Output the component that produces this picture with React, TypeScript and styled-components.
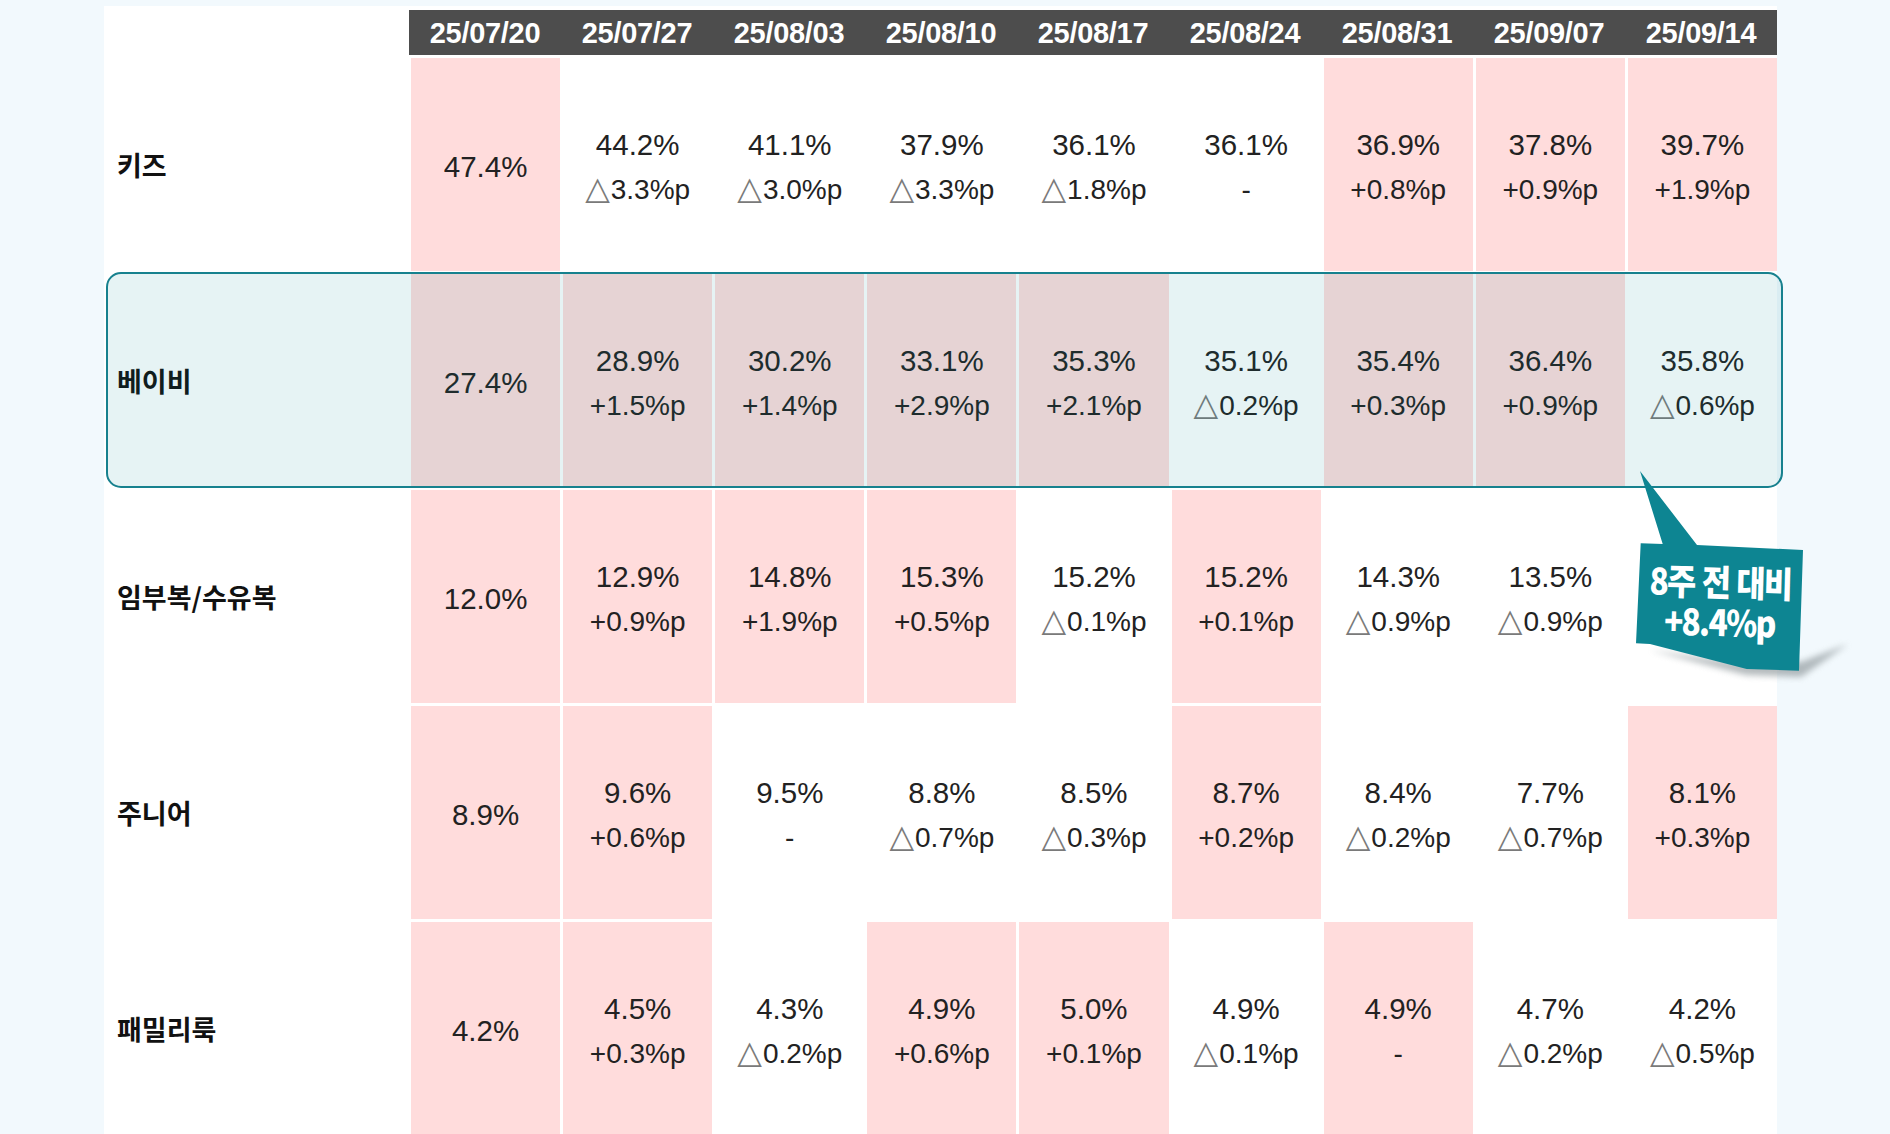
import * as React from "react";
import styled, { createGlobalStyle } from "styled-components";

const GlobalStyle = createGlobalStyle`
	html, body {
		margin: 0;
		padding: 0;
		background: #f2f9fd;
		overflow: hidden;
	}
	body {
		font-family: "Liberation Sans", "DejaVu Sans", sans-serif;
	}
`;

const DATES = [
	"25/07/20",
	"25/07/27",
	"25/08/03",
	"25/08/10",
	"25/08/17",
	"25/08/24",
	"25/08/31",
	"25/09/07",
	"25/09/14",
];

type CellData = { v: string; d?: string; hot?: boolean };
type RowData = { label: string; highlight?: boolean; cells: CellData[] };

const ROWS: RowData[] = [
	{
		label: "키즈",
		cells: [
			{ v: "47.4%", hot: true },
			{ v: "44.2%", d: "△3.3%p" },
			{ v: "41.1%", d: "△3.0%p" },
			{ v: "37.9%", d: "△3.3%p" },
			{ v: "36.1%", d: "△1.8%p" },
			{ v: "36.1%", d: "-" },
			{ v: "36.9%", d: "+0.8%p", hot: true },
			{ v: "37.8%", d: "+0.9%p", hot: true },
			{ v: "39.7%", d: "+1.9%p", hot: true },
		],
	},
	{
		label: "베이비",
		highlight: true,
		cells: [
			{ v: "27.4%", hot: true },
			{ v: "28.9%", d: "+1.5%p", hot: true },
			{ v: "30.2%", d: "+1.4%p", hot: true },
			{ v: "33.1%", d: "+2.9%p", hot: true },
			{ v: "35.3%", d: "+2.1%p", hot: true },
			{ v: "35.1%", d: "△0.2%p" },
			{ v: "35.4%", d: "+0.3%p", hot: true },
			{ v: "36.4%", d: "+0.9%p", hot: true },
			{ v: "35.8%", d: "△0.6%p" },
		],
	},
	{
		label: "임부복/수유복",
		cells: [
			{ v: "12.0%", hot: true },
			{ v: "12.9%", d: "+0.9%p", hot: true },
			{ v: "14.8%", d: "+1.9%p", hot: true },
			{ v: "15.3%", d: "+0.5%p", hot: true },
			{ v: "15.2%", d: "△0.1%p" },
			{ v: "15.2%", d: "+0.1%p", hot: true },
			{ v: "14.3%", d: "△0.9%p" },
			{ v: "13.5%", d: "△0.9%p" },
			{ v: "" },
		],
	},
	{
		label: "주니어",
		cells: [
			{ v: "8.9%", hot: true },
			{ v: "9.6%", d: "+0.6%p", hot: true },
			{ v: "9.5%", d: "-" },
			{ v: "8.8%", d: "△0.7%p" },
			{ v: "8.5%", d: "△0.3%p" },
			{ v: "8.7%", d: "+0.2%p", hot: true },
			{ v: "8.4%", d: "△0.2%p" },
			{ v: "7.7%", d: "△0.7%p" },
			{ v: "8.1%", d: "+0.3%p", hot: true },
		],
	},
	{
		label: "패밀리룩",
		cells: [
			{ v: "4.2%", hot: true },
			{ v: "4.5%", d: "+0.3%p", hot: true },
			{ v: "4.3%", d: "△0.2%p" },
			{ v: "4.9%", d: "+0.6%p", hot: true },
			{ v: "5.0%", d: "+0.1%p", hot: true },
			{ v: "4.9%", d: "△0.1%p" },
			{ v: "4.9%", d: "-", hot: true },
			{ v: "4.7%", d: "△0.2%p" },
			{ v: "4.2%", d: "△0.5%p" },
		],
	},
];

const Panel = styled.div`
	position: relative;
	margin: 6px 0 0 104px;
	width: 1673px;
	padding-top: 4px;
	background: #ffffff;
	display: flex;
	flex-direction: column;
	gap: 3px;
`;

const Row = styled.div<{ $highlight?: boolean }>`
	position: relative;
	display: grid;
	grid-template-columns: 304px repeat(9, 1fr);
	column-gap: 3px;
	height: 213px;
	&::after {
		content: "";
		display: ${({ $highlight }) => ($highlight ? "block" : "none")};
		position: absolute;
		left: 2px;
		right: -6px;
		top: -2px;
		bottom: -1px;
		border: 2px solid #17818e;
		border-radius: 15px;
		background: rgba(14, 134, 148, 0.1);
		pointer-events: none;
	}
`;

const HeaderRow = styled.div`
	display: grid;
	grid-template-columns: 305px 1fr;
	height: 45px;
`;

const HeaderBar = styled.div`
	grid-column: 2;
	display: grid;
	grid-template-columns: repeat(9, 1fr);
	align-items: center;
	background: #4d4d4d;
`;

const DateCell = styled.div`
	text-align: center;
	color: #ffffff;
	font-family: "Liberation Sans", sans-serif;
	font-weight: 700;
	font-size: 29px;
	letter-spacing: -0.3px;
	padding-top: 2px;
`;

const Label = styled.div`
	display: flex;
	align-items: center;
	padding-left: 13px;
	font-family: "Noto Sans CJK KR", "Noto Sans", sans-serif;
	font-weight: 700;
	font-size: 27px;
	color: #111111;
`;

const Cell = styled.div<{ $hot?: boolean }>`
	display: flex;
	flex-direction: column;
	align-items: center;
	justify-content: center;
	padding-top: 4px;
	background: ${({ $hot }) => ($hot ? "#ffdcdc" : "transparent")};
	color: #222222;
	font-family: "Liberation Sans", "DejaVu Sans", sans-serif;
	line-height: 45px;
`;

const Value = styled.div`
	font-size: 29.5px;
`;

const Delta = styled.div`
	font-size: 28px;
`;

const Tri = styled.span`
	font-family: "DejaVu Sans", sans-serif;
	color: #7a7a7a;
	font-size: 32px;
	line-height: 0;
	margin-right: 1px;
`;

const Callout = styled.div`
	position: absolute;
	left: 1532px;
	top: 462px;
	width: 320px;
	height: 220px;
	z-index: 2;
	svg {
		position: absolute;
		left: 0;
		top: 0;
		overflow: visible;
	}
`;

const CalloutText = styled.div`
	position: absolute;
	left: 0;
	top: 92px;
	width: 168px;
	text-align: center;
	color: #ffffff;
	font-family: "Noto Sans CJK KR", "Noto Sans", sans-serif;
	font-weight: 900;
	font-size: 36px;
	line-height: 40px;
	letter-spacing: -2px;
	word-spacing: 2px;
	white-space: nowrap;
	transform: rotate(1.5deg) scaleX(0.88);
`;

const CalloutShape = () => (
	<svg width="220" height="215" viewBox="0 0 220 215">
		<defs>
			<filter id="callout-blur" x="-20%" y="-50%" width="140%" height="200%">
				<feGaussianBlur stdDeviation="3" />
			</filter>
		</defs>
		<path
			d="M14 182 L110 207 L165 209 L212 176 L165 194 L110 196 Z"
			fill="#8c9599"
			opacity="0.65"
			filter="url(#callout-blur)"
		/>
		<path
			d="M4.7 75.3 L26.7 76 L4 3 L61 77 L167 82 L163 202.7 L110.7 201 L14 176 L0 175.3 Z"
			fill="#0d8592"
		/>
	</svg>
);

const DeltaText = ({ text }: { text: string }) => {
	if (text.startsWith("△")) {
		return (
			<Delta>
				<Tri>△</Tri>
				{text.slice(1)}
			</Delta>
		);
	}
	return <Delta>{text}</Delta>;
};

const App = () => {
	return (
		<>
			<GlobalStyle />
			<Panel>
				<HeaderRow>
					<HeaderBar>
						{DATES.map((d) => (
							<DateCell key={d}>{d}</DateCell>
						))}
					</HeaderBar>
				</HeaderRow>
				{ROWS.map((row) => (
					<Row key={row.label} $highlight={row.highlight}>
						<Label>{row.label}</Label>
						{row.cells.map((c, i) => (
							<Cell key={i} $hot={c.hot}>
								{c.v && <Value>{c.v}</Value>}
								{c.d && <DeltaText text={c.d} />}
							</Cell>
						))}
					</Row>
				))}
				<Callout>
					<CalloutShape />
					<CalloutText>
						8주 전 대비
						<br />
						+8.4%p
					</CalloutText>
				</Callout>
			</Panel>
		</>
	);
};

export default App;
